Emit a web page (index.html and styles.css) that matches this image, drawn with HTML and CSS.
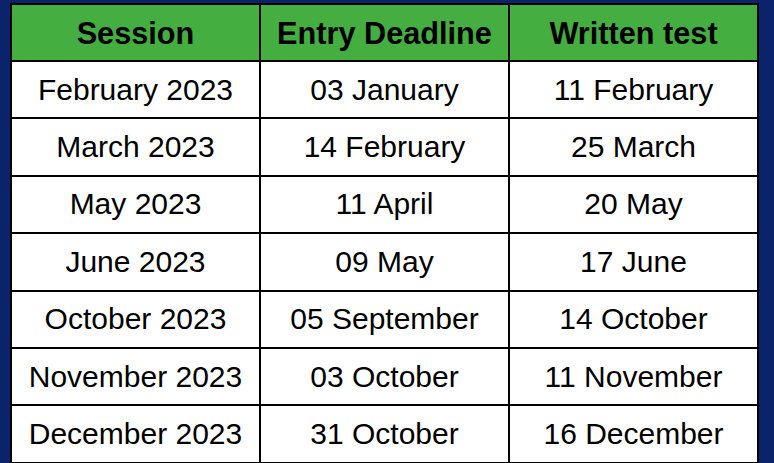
FILE: index.html
```html
<!DOCTYPE html>
<html>
<head>
<meta charset="utf-8">
<link rel="stylesheet" href="styles.css">
</head>
<body>
<div class="frame">
<table class="schedule">
  <thead>
    <tr><th>Session</th><th>Entry Deadline</th><th>Written test</th></tr>
  </thead>
  <tbody>
    <tr><td>February 2023</td><td>03 January</td><td>11 February</td></tr>
    <tr><td>March 2023</td><td>14 February</td><td>25 March</td></tr>
    <tr><td>May 2023</td><td>11 April</td><td>20 May</td></tr>
    <tr><td>June 2023</td><td>09 May</td><td>17 June</td></tr>
    <tr><td>October 2023</td><td>05 September</td><td>14 October</td></tr>
    <tr><td>November 2023</td><td>03 October</td><td>11 November</td></tr>
    <tr><td>December 2023</td><td>31 October</td><td>16 December</td></tr>
  </tbody>
</table>
</div>
</body>
</html>
```
FILE: styles.css
```css
html, body {
  margin: 0;
  padding: 0;
  background: #0a236a;
  height: 100%;
  overflow: hidden;
}
.frame {
  padding: 3px 0 0 10px;
}
.schedule {
  border-collapse: collapse;
  width: 749px;
  table-layout: fixed;
  font-family: "Liberation Sans", Arial, sans-serif;
  font-size: 30px;
  color: #000;
}
.schedule th,
.schedule td {
  border: 2px solid #000;
  text-align: center;
  padding: 0;
  line-height: 1;
}
.schedule th {
  background: #45ae40;
  font-weight: bold;
  font-size: 30.7px;
  height: 52px;
  padding-top: 3px;
}
.schedule td {
  background: #fff;
  height: 55.4px;
}
```
